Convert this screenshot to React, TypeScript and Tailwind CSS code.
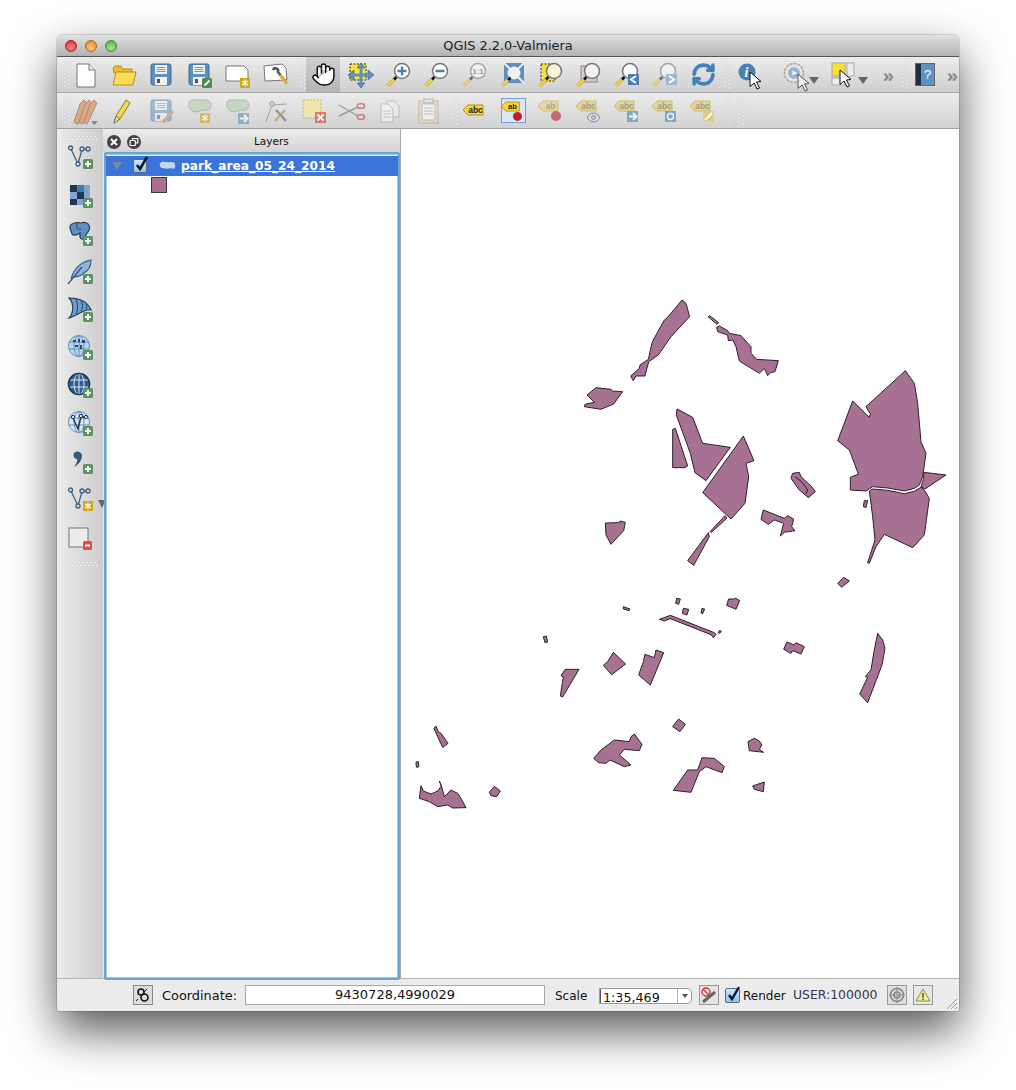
import React from "react";
import { Hand, RefreshCw, Eye } from "lucide-react";

const font = "font-['DejaVu_Sans',sans-serif]";

const Ico = ({ children, className = "" }: { children: React.ReactNode; className?: string }) => (
  <svg width="28" height="28" viewBox="0 0 28 28" className={`overflow-visible ${className}`}>
    {children}
  </svg>
);

const Grip = ({ className = "" }: { className?: string }) => (
  <svg width="8" height="28" viewBox="0 0 8 28" className={`shrink-0 ${className}`}>
    {[1, 5, 9, 13, 17, 21, 25].map((y) => (
      <g key={y}>
        <circle cx="2" cy={y} r="1.1" fill="#fafafa" stroke="#c4c4c4" strokeWidth=".4" />
        <circle cx="6" cy={y + 2} r="1.1" fill="#fafafa" stroke="#c4c4c4" strokeWidth=".4" />
      </g>
    ))}
  </svg>
);

const HGrip = ({ className = "" }: { className?: string }) => (
  <svg width="36" height="6" viewBox="0 0 36 6" className={className}>
    {[1, 5, 9, 13, 17, 21, 25, 29, 33].map((x) => (
      <g key={x}>
        <circle cx={x} cy="1.5" r="1.1" fill="#fafafa" stroke="#c4c4c4" strokeWidth=".4" />
        <circle cx={x + 2} cy="4.5" r="1.1" fill="#fafafa" stroke="#c4c4c4" strokeWidth=".4" />
      </g>
    ))}
  </svg>
);

const PlusBadge = ({ x = 17, y = 17 }: { x?: number; y?: number }) => (
  <g transform={`translate(${x} ${y})`}>
    <rect width="10" height="10" rx="1.5" fill="#5b9460" />
    <path d="M5 2v6M2 5h6" stroke="#fff" strokeWidth="2" />
  </g>
);

const StarBadge = ({ x = 17, y = 17, color = "#d0a818" }: { x?: number; y?: number; color?: string }) => (
  <g transform={`translate(${x} ${y})`}>
    <rect width="10" height="10" fill={color} />
    <path d="M5 1.5v7M2 3l6 4M8 3L2 7" stroke="#fff" strokeWidth="1.2" />
  </g>
);

const Cursor = ({ x = 14, y = 12 }: { x?: number; y?: number }) => (
  <path
    transform={`translate(${x} ${y})`}
    d="M0 0L11 9.5L6.5 10L9.5 16L7 17L4.2 11L0 14.5Z"
    fill="#fff"
    stroke="#111"
    strokeWidth="1"
  />
);

const Floppy = () => (
  <g>
    <rect x="3" y="3" width="20" height="21" rx="2" fill="#5f8fc1" stroke="#41688f" />
    <rect x="7" y="4" width="12" height="9" fill="#f4f4f4" />
    <path d="M8.5 6.5h9M8.5 8.5h9M8.5 10.5h9" stroke="#777" strokeWidth=".8" />
    <rect x="7" y="16" width="12" height="8" fill="#f0f0f0" />
    <rect x="9" y="18" width="3" height="4" fill="#555" />
  </g>
);

const Lens = ({ fill = "#fff", children, faded = false }: { fill?: string; children?: React.ReactNode; faded?: boolean }) => (
  <g opacity={faded ? 0.55 : 1}>
    <path d="M2.5 25L10 17.5" stroke="#d8b02c" strokeWidth="3.6" />
    <path d="M2.5 25L10 17.5" stroke="#f5dc62" strokeWidth="1.6" />
    <path d="M9 18.5L11.5 16" stroke="#111" strokeWidth="2.6" />
    <circle cx="17" cy="10" r="7.5" fill={fill} stroke="#777" strokeWidth="1.5" />
    {children}
  </g>
);

const Tag = ({ label = "abc", fill = "#e8d070", ink = "#7c7c70", stroke = "#c8a830" }: { label?: string; fill?: string; ink?: string; stroke?: string }) => (
  <g>
    <path d="M1 9L6 4H21V14H6Z" fill={fill} stroke={stroke} />
    <text x="13.5" y="12" textAnchor="middle" fontSize="8.5" fontWeight="700" fontFamily="Liberation Sans, sans-serif" fill={ink}>
      {label}
    </text>
  </g>
);

const Vertex = () => (
  <g fill="none" stroke="#3f5f80" strokeWidth="1.3">
    <path d="M4 5L11 20L15 5.5L21 5" />
    <circle cx="3.5" cy="4" r="2" fill="#cfe0ef" />
    <circle cx="11" cy="20" r="2" fill="#cfe0ef" />
    <circle cx="15" cy="5" r="2" fill="#cfe0ef" />
    <circle cx="21" cy="5" r="2" fill="#cfe0ef" />
  </g>
);

const Globe = ({ fill = "#bcd3ea", stroke = "#5f8fc1" }: { fill?: string; stroke?: string }) => (
  <g fill="none" stroke={stroke} strokeWidth="1">
    <circle cx="12" cy="12" r="10.5" fill={fill} />
    <ellipse cx="12" cy="12" rx="5" ry="10.5" />
    <path d="M2 8h20M2 15h20M12 1.5v21" />
  </g>
);

// map outlines below use the crop coordinates they were measured in (3x)
const upper = [
  "333,30 345,40 356,80 300,140 262,195 233,215 222,258 195,258 187,272 179,258 205,235 207,225 232,208 244,155 280,90 290,82",
  "411,80 416,77 443,98 438,103",
  "437,112 445,108 470,122 475,130 510,137 540,170 540,190 557,208 622,212 612,245 598,248 590,257 580,235 565,250 505,213 495,170 485,150 472,152 470,135 440,125",
  "75,293 120,298 125,303 155,305 128,342 90,358 40,350 42,343 70,337 48,315",
  "318,357 365,382 395,460 478,472 405,572 372,548 358,490 316,375",
  "305,418 313,415 350,528 342,533 305,533",
  "517,438 549,512 525,520 533,560 522,640 480,687 395,608",
  "103,699 145,698 147,693 163,697 158,722 120,763 105,735",
  "462,677 468,684 422,727 417,725",
  "412,728 415,740 368,826 350,812",
  "665,550 685,547 690,560 722,590 733,605 712,623 685,600 660,565",
  "577,660 640,685 650,677 668,687 662,710 672,722 640,727 628,738 638,700 610,690 592,703 570,688",
  "1003,242 1030,280 1040,340 1050,455 1065,490 1055,560 1045,585 1030,595 1000,603 950,594 905,590 885,603 838,600 838,562 862,552 835,480 800,452 845,333 895,382 898,372 885,350",
  "895,603 905,597 950,601 1000,611 1030,604 1050,592 1060,600 1075,625 1060,735 1025,773 940,733 915,770 895,820 890,818 912,750 905,680",
  "1058,547 1125,555 1062,597 1050,590 1058,565",
  "880,632 890,632 885,653 877,650",
  "818,862 835,873 812,892 800,880",
];

const lower = [
  "812,25 823,27 818,43 809,40",
  "832,55 848,58 843,75 829,70",
  "888,55 896,57 890,71 885,69",
  "652,50 672,57 669,62 652,57",
  "968,27 985,27 988,24 1001,32 990,58 962,46",
  "760,88 793,76 925,128 930,133 922,143 915,134 793,86 775,93",
  "936,128 941,121 946,124 941,130",
  "412,140 421,138 425,156 417,158",
  "1143,156 1165,165 1170,158 1195,170 1185,192 1160,182 1155,190 1133,178",
  "622,187 659,222 617,254 592,226 605,215",
  "717,193 745,203 750,180 773,188 765,208 733,285 698,255 712,215",
  "478,238 519,238 470,321 463,318 472,260 465,257",
  "1415,130 1430,150 1437,175 1428,225 1385,338 1361,312 1385,262 1378,260 1395,240 1403,190",
  "90,408 97,425 105,430 126,460 110,472 95,440 84,415",
  "625,450 670,455 675,440 685,432 708,463 700,482 655,478 640,495 675,525 655,530 612,510 600,520 578,518 563,505 585,480",
  "818,387 838,403 822,425 800,410",
  "1045,445 1060,453 1068,465 1060,478 1073,487 1030,482 1026,455",
  "888,503 925,505 955,530 948,548 900,530 880,545 855,607 802,601 845,540 875,540",
  "1075,576 1072,605 1045,598 1040,588",
  "30,516 37,515 39,530 31,532",
  "45,587 52,603 75,612 95,603 106,588 100,573 107,590 115,620 135,600 155,610 165,625 180,653 140,654 125,645 95,650 70,635 40,625",
  "265,589 283,603 272,620 255,617 250,607",
];

const Cell = ({ children, className = "" }: { children: React.ReactNode; className?: string }) => (
  <div className={`w-[38px] h-full flex items-center justify-center shrink-0 ${className}`}>{children}</div>
);

const ToolbarOne = () => (
  <div className="h-9 flex items-center pl-[6px] bg-gradient-to-b from-[#ececec] to-[#cfcfcf] border-b border-[#a8a8a8]">
    <Grip className="mr-[-4px]" />
    <Cell>
      <Ico><path d="M5 3H17L23 9V26H5Z" fill="#fff" stroke="#777" /><path d="M17 3V9H23" fill="#eee" stroke="#777" /></Ico>
    </Cell>
    <Cell>
      <Ico><path d="M3 7L5 5H11L13 8H22V12H4Z" fill="#e8bd30" stroke="#b59020" /><path d="M6 11H26L23 24H3Z" fill="#fbdb58" stroke="#b59020" /></Ico>
    </Cell>
    <Cell><Ico><Floppy /></Ico></Cell>
    <Cell>
      <Ico>
        <Floppy />
        <rect x="16" y="17" width="10" height="10" rx="1.5" fill="#4e8c52" />
        <path d="M18.5 24.5L23.5 19.5" stroke="#fff" strokeWidth="2" />
      </Ico>
    </Cell>
    <Cell>
      <Ico><path d="M2 5H20L24 9V20H2Z" fill="#fff" stroke="#777" /><StarBadge x={16} y={17} /></Ico>
    </Cell>
    <Cell>
      <Ico>
        <path d="M2 5L20 3L24 7L25 19L3 20Z" fill="#fff" stroke="#777" />
        <path d="M11 9C12 6 17 7 16 11L24 21" fill="none" stroke="#555" strokeWidth="2.6" />
        <path d="M18 14L25 23" stroke="#dcb232" strokeWidth="3" />
      </Ico>
    </Cell>
    <Grip className="mr-[-1px] ml-[4px]" />
    <div className="w-[34px] h-full flex items-center justify-center shrink-0 bg-gradient-to-b from-[#cfcfcf] to-[#b4b4b4]">
      <Hand size={25} fill="#fff" color="#111" strokeWidth={1.4} />
    </div>
    <Cell className="ml-[2px]">
      <Ico>
        <rect x="3" y="3" width="16" height="16" fill="#f6e23e" stroke="#222" strokeWidth="1" strokeDasharray="2 1.5" />
        <path d="M14 2L18 7H10ZM14 27L18 22H10ZM1 14L7 9V19ZM27 14L21 9V19Z" fill="#5f8fc1" stroke="#355f88" strokeWidth=".6" />
        <path d="M14 6V23M6 14H22" stroke="#5f8fc1" strokeWidth="3" />
      </Ico>
    </Cell>
    <Cell>
      <Ico><Lens><path d="M17 5.5V14.5M12.5 10H21.5" stroke="#4a80b8" strokeWidth="2.4" /></Lens></Ico>
    </Cell>
    <Cell>
      <Ico><Lens><path d="M12.5 10H21.5" stroke="#4a80b8" strokeWidth="2.4" /></Lens></Ico>
    </Cell>
    <Cell>
      <Ico>
        <Lens faded>
          <text x="17" y="13" textAnchor="middle" fontSize="8" fontWeight="700" fontFamily="Liberation Sans, sans-serif" fill="#666">1:1</text>
        </Lens>
      </Ico>
    </Cell>
    <Cell>
      <Ico>
        <rect x="5" y="2" width="20" height="20" fill="#5f8fc1" />
        <path d="M5 2L25 22M25 2L5 22" stroke="#e8eef4" strokeWidth="2" />
        <circle cx="15" cy="12" r="6.5" fill="#eef2f6" />
        <path d="M3 25L10 18" stroke="#d8b02c" strokeWidth="3.6" />
        <path d="M3 25L10 18" stroke="#f5dc62" strokeWidth="1.6" />
        <path d="M9 19L11.5 16.5" stroke="#111" strokeWidth="2.6" />
      </Ico>
    </Cell>
    <Cell>
      <Ico>
        <rect x="4" y="3" width="14" height="17" fill="#f6e23e" stroke="#222" strokeDasharray="2 1.5" />
        <Lens fill="#f6f3d8" />
      </Ico>
    </Cell>
    <Cell>
      <Ico>
        <rect x="6" y="5" width="16" height="16" fill="#d5ccd0" stroke="#8b8088" />
        <Lens fill="#f2f2f2" />
      </Ico>
    </Cell>
    <Cell>
      <Ico>
        <Lens />
        <rect x="15" y="13" width="11" height="11" fill="#4a80b8" />
        <path d="M23 15L18 18.5L23 22" fill="none" stroke="#fff" strokeWidth="2" />
      </Ico>
    </Cell>
    <Cell>
      <Ico>
        <Lens faded />
        <rect x="15" y="13" width="11" height="11" fill="#9cb9d6" />
        <path d="M18 15L23 18.5L18 22" fill="none" stroke="#fff" strokeWidth="2" />
      </Ico>
    </Cell>
    <Cell><RefreshCw size={25} color="#3f81bf" strokeWidth={3.4} /></Cell>
    <Grip className="ml-[1px]" />
    <div className="w-[37px] h-full flex items-center justify-center shrink-0">
      <Ico>
        <circle cx="11" cy="11" r="8.5" fill="#4a80b8" />
        <text x="10.5" y="16" textAnchor="middle" fontSize="14" fontWeight="700" fontStyle="italic" fontFamily="Liberation Serif, serif" fill="#fff">i</text>
        <Cursor x={14} y={11} />
      </Ico>
    </div>
    <div className="w-[60px] h-full flex items-center justify-center shrink-0 pl-1">
      <Ico>
        <circle cx="13" cy="12" r="9.5" fill="#e4e4e4" stroke="#a8a8a8" strokeWidth="1.6" strokeDasharray="3 1" />
        <circle cx="13" cy="12" r="5.5" fill="#8fb4d8" stroke="#b8b8b8" />
        <path d="M11.5 9.5L16 12L11.5 14.5Z" fill="#fff" />
        <g opacity=".65"><Cursor x={17} y={13} /></g>
      </Ico>
      <span className="w-0 h-0 border-x-[5px] border-x-transparent border-t-[7px] border-t-[#666] mt-3" />
    </div>
    <div className="w-[42px] h-full flex items-center justify-center shrink-0">
      <Ico>
        <rect x="2" y="2" width="13" height="13" fill="#fbe032" stroke="#a8a8a8" />
        <rect x="17" y="2" width="7" height="13" fill="#ededed" stroke="#a8a8a8" />
        <rect x="2" y="17" width="13" height="7" fill="#ededed" stroke="#a8a8a8" />
        <Cursor x={10} y={9} />
      </Ico>
      <span className="w-0 h-0 border-x-[5px] border-x-transparent border-t-[7px] border-t-[#666] mt-3" />
    </div>
    <span className="text-[18px] font-bold text-[#8a8a8a] ml-[13px] leading-none">»</span>
    <Grip className="ml-[7px]" />
    <div className="ml-[6px] w-5 h-[23px] flex shrink-0 border border-[#666]">
      <div className="w-[5px] bg-[#1f2d3d]" />
      <div className="flex-1 bg-[#6192c4] text-white text-[13px] leading-[21px] text-center font-['Liberation_Sans',sans-serif]">?</div>
    </div>
    <span className="text-[18px] font-bold text-[#8a8a8a] ml-[12px] leading-none">»</span>
  </div>
);

const ToolbarTwo = () => (
  <div className="h-9 flex items-center pl-[6px] bg-gradient-to-b from-[#ececec] to-[#d2d2d2] border-b border-[#a0a0a0]">
    <Grip className="mr-[-4px]" />
    <Cell className="opacity-70">
      <Ico>
        <path d="M2 25L8 7L12 3L15 6L9 25L5 27Z" fill="#d99060" stroke="#9a6a48" />
        <path d="M7 25L13 7L17 3L20 6L14 25L10 27Z" fill="#d99060" stroke="#9a6a48" />
        <path d="M12 25L18 7L22 3L25 6L17 23L15 27Z" fill="#d99060" stroke="#9a6a48" />
        <path d="M19 24h7l-3.5 4z" fill="#666" />
      </Ico>
    </Cell>
    <Cell className="ml-[-3px]">
      <Ico>
        <path d="M7 26L9 19L19 3L23 6L13 22Z" fill="#f3d84c" stroke="#8a7a30" />
        <path d="M7 26L9 19L13 22Z" fill="#efe5c4" stroke="#8a7a30" />
      </Ico>
    </Cell>
    <Cell className="ml-[3px] opacity-50">
      <Ico>
        <Floppy />
        <path d="M15 25L25 14" stroke="#cc7a3c" strokeWidth="3" />
      </Ico>
    </Cell>
    <Cell className="opacity-60">
      <Ico>
        <path d="M3 5C6 1 13 4 18 3C25 2 26 8 24 11C22 15 19 12 14 14C8 17 1 12 3 5Z" fill="#b5d0b0" stroke="#8aa088" />
        <StarBadge x={14} y={16} />
      </Ico>
    </Cell>
    <Cell className="opacity-60">
      <Ico>
        <path d="M3 5C6 1 13 4 18 3C25 2 26 8 24 11C22 15 19 12 14 14C8 17 1 12 3 5Z" fill="#b5d0b0" stroke="#8aa088" />
        <rect x="14" y="16" width="11" height="11" fill="#5f8fc1" />
        <path d="M16 21.5H23M20 18L23.5 21.5L20 25" fill="none" stroke="#fff" strokeWidth="2" />
      </Ico>
    </Cell>
    <Cell className="opacity-60">
      <Ico>
        <path d="M4 25L10 8L25 7" fill="none" stroke="#777" />
        <circle cx="10" cy="7" r="2.4" fill="#b5d0b0" stroke="#777" />
        <path d="M13 24L23 13" stroke="#b88f3c" strokeWidth="2.4" />
        <path d="M14 13L24 24" stroke="#666" strokeWidth="2.4" />
      </Ico>
    </Cell>
    <Cell className="opacity-70">
      <Ico>
        <rect x="3" y="3" width="18" height="18" fill="#f4e79a" stroke="#b5a040" strokeDasharray="2 1.5" />
        <rect x="15" y="15" width="11" height="11" fill="#d6524a" />
        <path d="M17.5 17.5L23.5 23.5M23.5 17.5L17.5 23.5" stroke="#fff" strokeWidth="2" />
      </Ico>
    </Cell>
    <Cell className="opacity-80">
      <Ico>
        <path d="M1 8L20 19M1 19L20 10" stroke="#8c8c8c" strokeWidth="1.4" />
        <ellipse cx="23" cy="9" rx="3.6" ry="2.4" fill="none" stroke="#c25a5a" strokeWidth="1.4" />
        <ellipse cx="23" cy="20" rx="3.6" ry="2.4" fill="none" stroke="#c25a5a" strokeWidth="1.4" />
      </Ico>
    </Cell>
    <Cell className="opacity-50">
      <Ico>
        <path d="M11 4H18L23 9V20H11Z" fill="#f3f3f3" stroke="#999" />
        <path d="M5 7H12L17 12V25H5Z" fill="#fff" stroke="#999" />
        <path d="M7 14H15M7 17H15M7 20H15" stroke="#aaa" />
      </Ico>
    </Cell>
    <Cell className="opacity-50">
      <Ico>
        <rect x="5" y="4" width="19" height="22" fill="#f2d9b8" stroke="#b8884c" />
        <rect x="8" y="7" width="13" height="16" fill="#fff" stroke="#999" />
        <rect x="10" y="2" width="9" height="4" fill="#ddd" stroke="#888" />
        <path d="M10 11H19M10 14H19M10 17H19" stroke="#999" />
      </Ico>
    </Cell>
    <Grip className="mr-[-3px] ml-[4px]" />
    <Cell>
      <Ico>
        <g transform="translate(1 4)">
          <Tag fill="#f5d53a" ink="#222" stroke="#b59020" />
        </g>
      </Ico>
    </Cell>
    <Cell>
      <div className="w-[25px] h-[25px] border border-[#6f9ee0] bg-[#dbe6f2] flex items-center justify-center">
        <Ico className="scale-90">
          <Tag label="ab" fill="#f5d53a" ink="#222" stroke="#b59020" />
          <circle cx="19" cy="20" r="5" fill="#b8232a" />
        </Ico>
      </div>
    </Cell>
    <Cell className="opacity-60">
      <Ico>
        <Tag label="ab" />
        <circle cx="19" cy="19" r="5" fill="#b8232a" />
      </Ico>
    </Cell>
    <Cell className="opacity-70">
      <Ico>
        <Tag />
        <g transform="translate(11 13)"><Eye size={15} color="#4a6c90" strokeWidth={1.6} /></g>
      </Ico>
    </Cell>
    <Cell className="opacity-70">
      <Ico>
        <Tag />
        <rect x="14" y="14" width="11" height="11" fill="#5f8fc1" />
        <path d="M16 19.5H23M20 16L23.5 19.5L20 23" fill="none" stroke="#fff" strokeWidth="2" />
      </Ico>
    </Cell>
    <Cell className="opacity-70">
      <Ico>
        <Tag />
        <rect x="14" y="14" width="11" height="11" fill="#5f8fc1" />
        <circle cx="19.5" cy="19.5" r="3" fill="none" stroke="#fff" strokeWidth="1.4" />
      </Ico>
    </Cell>
    <Cell className="opacity-70">
      <Ico>
        <Tag />
        <rect x="14" y="14" width="11" height="11" fill="#e0c860" />
        <path d="M16 23L23 16" stroke="#fff" strokeWidth="2.4" />
      </Ico>
    </Cell>
    <Grip className="ml-[2px]" />
    <Grip className="ml-[5px]" />
  </div>
);

const SideBar = () => (
  <div className="w-[46px] shrink-0 flex flex-col items-center bg-gradient-to-r from-[#ececec] to-[#cdcdcd] pt-[6px] pl-[2px]">
    <HGrip className="mr-[2px]" />
    <div className="h-[38px] mt-[-2px] flex items-center justify-center shrink-0">
      <Ico><Vertex /><PlusBadge x={16} y={15} /></Ico>
    </div>
    <div className="h-[38px] flex items-center justify-center shrink-0">
      <Ico>
        <rect x="3" y="3" width="20" height="20" fill="#7fa6d2" />
        <path d="M3 3h7v7H3zM10 10h7v7h-7zM3 17h7v6H3z" fill="#1f3550" />
        <path d="M10 3h7v7h-7z" fill="#4a78a8" />
        <PlusBadge x={16} y={16} />
      </Ico>
    </div>
    <div className="h-[38px] flex items-center justify-center shrink-0">
      <Ico>
        <path d="M3 8C2 3 10 2 14 3C20 1 24 5 22 10C21 13 19 13 18 17C17 20 14 20 13 17V13C10 15 7 16 5 14Z" fill="#5f8fc1" stroke="#243f5c" strokeWidth="1.2" />
        <path d="M10 4C9 8 11 10 14 9" fill="none" stroke="#243f5c" />
        <PlusBadge x={16} y={16} />
      </Ico>
    </div>
    <div className="h-[38px] flex items-center justify-center shrink-0">
      <Ico>
        <path d="M4 21C6 12 13 4 24 2C24 9 21 13 17 15C13 19 9 19 5 19Z" fill="#8fb4d8" stroke="#34587c" strokeWidth="1.1" />
        <path d="M1 26L15 9" stroke="#34587c" strokeWidth="1.2" />
        <PlusBadge x={16} y={16} />
      </Ico>
    </div>
    <div className="h-[38px] flex items-center justify-center shrink-0">
      <Ico>
        <path d="M2 2C10 2 20 4 24 14C18 12 10 20 2 22C6 18 8 8 2 2Z" fill="#6f9ccb" stroke="#1f3f60" strokeWidth="1.2" />
        <path d="M9 3C11 8 11 13 9 18M14 5C16 9 16 12 14 15M19 8C20 10 20 11 19 13" stroke="#1f3f60" fill="none" />
        <PlusBadge x={16} y={16} />
      </Ico>
    </div>
    <div className="h-[38px] flex items-center justify-center shrink-0">
      <Ico>
        <Globe />
        <path d="M6 6h3v2H6zM11 5h2v3h-2zM15 6h3v3h-3zM8 11h3v2H8zM13 11h2v4h-2z" fill="#244a70" />
        <PlusBadge x={16} y={16} />
      </Ico>
    </div>
    <div className="h-[38px] flex items-center justify-center shrink-0">
      <Ico>
        <Globe fill="#2f5f92" stroke="#dfe9f3" />
        <circle cx="12" cy="12" r="10.5" fill="none" stroke="#1f3550" strokeWidth="1.6" />
        <PlusBadge x={16} y={16} />
      </Ico>
    </div>
    <div className="h-[38px] flex items-center justify-center shrink-0">
      <Ico>
        <Globe fill="#dce8f4" />
        <path d="M6 8L11 19L14 7L19 7" fill="none" stroke="#1f3550" strokeWidth="1.4" />
        <circle cx="6" cy="7" r="1.6" fill="#fff" stroke="#1f3550" />
        <circle cx="14" cy="6" r="1.6" fill="#fff" stroke="#1f3550" />
        <circle cx="19" cy="7" r="1.6" fill="#fff" stroke="#1f3550" />
        <PlusBadge x={16} y={16} />
      </Ico>
    </div>
    <div className="h-[38px] flex items-center justify-center shrink-0">
      <Ico>
        <path d="M8 4C13 2 17 6 14 12C13 15 9 18 7 19C9 16 11 13 10 11C7 11 5 6 8 4Z" fill="#36587c" />
        <PlusBadge x={16} y={16} />
      </Ico>
    </div>
    <div className="h-[38px] flex items-center justify-center shrink-0 relative">
      <Ico><Vertex /><StarBadge x={16} y={15} /></Ico>
      <span className="absolute left-[31px] top-[19px] w-0 h-0 border-x-[4px] border-x-transparent border-t-[8px] border-t-[#666]" />
    </div>
    <div className="h-[40px] flex items-center justify-center shrink-0">
      <Ico>
        <rect x="2" y="3" width="19" height="19" fill="#ececec" stroke="#777" />
        <rect x="16" y="16" width="9" height="9" rx="1.5" fill="#e44a50" />
        <path d="M18 20.5H23" stroke="#fff" strokeWidth="2" />
      </Ico>
    </div>
    <HGrip className="mr-[2px] mt-[2px]" />
  </div>
);

const LayersDock = () => (
  <div className="w-[297px] shrink-0 flex flex-col bg-[#e6e6e6]">
    <div className="h-[23px] flex items-center relative pt-[2px] bg-gradient-to-b from-[#ececec] to-[#d4d4d4]">
      <span className="ml-[4px] w-[14px] h-[14px] rounded-full bg-[#444] flex items-center justify-center">
        <svg width="8" height="8" viewBox="0 0 8 8"><path d="M1 1L7 7M7 1L1 7" stroke="#fff" strokeWidth="2" /></svg>
      </span>
      <span className="ml-[6px] w-[14px] h-[14px] rounded-full bg-[#444] flex items-center justify-center">
        <svg width="10" height="10" viewBox="0 0 10 10" fill="none" stroke="#fff" strokeWidth="1.2"><rect x="1" y="3.5" width="5.5" height="5" rx="1" /><path d="M3.5 3V1.5H8.8V6H7" /></svg>
      </span>
      <span className={`absolute left-[151px] text-[10.5px] text-[#111] ${font}`}>Layers</span>
    </div>
    <div className="flex-1 bg-white border-[2px] border-[#68a7d2] rounded-[2px] ml-[1px] mb-[-2px] shadow-[inset_0_0_0_1px_#9cc8e4] relative z-10 pt-[2px]">
      <div className="h-[20px] bg-[#3a74d8] flex items-center relative">
        <span className="ml-[6px] w-0 h-0 border-x-[5px] border-x-transparent border-t-[8px] border-t-[#7c8aa4]" />
        <span className="ml-[11px] w-[14px] h-[14px] bg-gradient-to-b from-[#cfe6f8] to-[#8fc0e8] border border-[#5a6a7a] rounded-[2px] relative">
          <svg width="16" height="17" viewBox="0 0 16 17" className="absolute left-0 top-[-5px]"><path d="M3 10L6 14L13 2" fill="none" stroke="#0b1a33" strokeWidth="2.6" /></svg>
        </span>
        <svg width="18" height="12" viewBox="0 0 18 12" className="ml-[12px]"><path d="M1 3C4 0 8 3 12 2C17 1 17 7 15 9C12 7 8 10 5 8C2 9 0 6 1 3Z" fill="#c4d4ea" /></svg>
        <span className={`ml-[4px] text-[12.2px] font-bold text-white underline ${font}`}>park_area_05_24_2014</span>
      </div>
      <div className="ml-[45px] mt-[1px] w-4 h-4 bg-[#a77194] border border-[#4a3040]" />
    </div>
  </div>
);

const MapCanvas = () => (
  <div className="flex-1 bg-white border-l border-[#a8a8a8] min-w-0">
    <svg viewBox="400 129 558 849" className="w-full h-full block">
      <g transform="translate(570 290) scale(.33333)" fill="#a77194" stroke="#2e2028">
        {upper.map((p) => (
          <polygon key={p} points={p} vectorEffect="non-scaling-stroke" strokeWidth="1" />
        ))}
        <path d="M672,560 L695,578 L710,600 L705,612" fill="none" vectorEffect="non-scaling-stroke" strokeWidth="1" />
      </g>
      <g transform="translate(405 590) scale(.33333)" fill="#a77194" stroke="#2e2028">
        {lower.map((p) => (
          <polygon key={p} points={p} vectorEffect="non-scaling-stroke" strokeWidth="1" />
        ))}
      </g>
    </svg>
  </div>
);

const StatusBar = () => (
  <div className={`h-[33px] shrink-0 flex items-center relative bg-[#ececec] border-t border-[#b4b4b4] text-[12px] text-[#111] ${font}`}>
    <div className="ml-[76px] w-5 h-5 border border-[#888] bg-[#dcdcdc] flex items-center justify-center shrink-0">
      <svg width="16" height="16" viewBox="0 0 16 16" fill="none" stroke="#111" strokeWidth="1.6">
        <circle cx="6" cy="5" r="3" />
        <circle cx="9.5" cy="10.5" r="3.5" />
        <path d="M12 2L9 5M3 12L1 14" strokeWidth="1" />
      </svg>
    </div>
    <span className="ml-[9px] w-[83px] shrink-0 text-[12.9px] pt-[1px]">Coordinate:</span>
    <div className="w-[300px] h-5 shrink-0 border border-[#a8a8a8] bg-white text-center text-[13px] leading-[18px]">9430728,4990029</div>
    <span className="ml-[10px] w-[44px] shrink-0 pt-[1px]">Scale</span>
    <div className="w-[93px] h-4 mt-[2px] shrink-0 flex border border-[#9a9a9a] rounded-r-[5px] bg-white">
      <span className="flex-1 leading-[17px] pl-[2px] text-[12.7px] border-l border-[#555]">1:35,469</span>
      <span className="w-[14px] border-l border-[#bbb] flex items-center justify-center">
        <span className="w-0 h-0 border-x-[3px] border-x-transparent border-t-[4px] border-t-[#555]" />
      </span>
    </div>
    <div className="ml-[7px] w-5 h-5 shrink-0 border border-[#999] bg-[#e4e4e4] flex items-center justify-center">
      <svg width="18" height="18" viewBox="0 0 18 18" fill="none">
        <path d="M3 16L15 6" stroke="#666" strokeWidth="3" />
        <circle cx="6" cy="6" r="4" stroke="#d23a3a" strokeWidth="1.4" />
        <path d="M3.2 3.2L8.8 8.8" stroke="#d23a3a" strokeWidth="1.4" />
      </svg>
    </div>
    <span className="ml-[6px] w-[15px] h-[15px] shrink-0 bg-gradient-to-b from-[#cfe6f8] to-[#8fc0e8] border border-[#5a6a7a] rounded-[2px] relative">
      <svg width="16" height="17" viewBox="0 0 16 17" className="absolute left-0 top-[-4px]"><path d="M3 10L6 14L13 2" fill="none" stroke="#0b1a33" strokeWidth="2.4" /></svg>
    </span>
    <span className="ml-[3px] w-[50px] shrink-0 pt-[1px]">Render</span>
    <span className="text-[#333355] w-[94px] shrink-0 text-[12.4px] pt-[1px]">USER:100000</span>
    <div className="w-5 h-5 shrink-0 border border-[#999] bg-[#dedede] flex items-center justify-center">
      <svg width="16" height="16" viewBox="0 0 16 16" fill="none" stroke="#888" strokeWidth="1.6">
        <circle cx="8" cy="8" r="6.5" />
        <circle cx="8" cy="8" r="3" />
        <path d="M8 0V16M0 8H16" strokeWidth="1" />
      </svg>
    </div>
    <div className="ml-[6px] w-5 h-5 shrink-0 border border-[#999] bg-[#e8e8e8] flex items-center justify-center">
      <svg width="16" height="16" viewBox="0 0 16 16">
        <path d="M8 2L15 14H1Z" fill="#f3ed9a" stroke="#8a8a50" />
        <path d="M8 6V10.5M8 11.5V13" stroke="#333" strokeWidth="1.3" />
      </svg>
    </div>
    <svg width="12" height="12" viewBox="0 0 12 12" className="absolute right-[1px] bottom-[1px]" stroke="#999">
      <path d="M1 11L11 1M5 11L11 5M9 11L11 9" />
    </svg>
  </div>
);

const App = () => (
  <div className="w-[1016px] h-[1090px] overflow-hidden bg-white pt-[35px] pl-[57px]">
    <div className="w-[902px] h-[976px] flex flex-col rounded-t-[5px] rounded-b-[3px] overflow-hidden shadow-[0_20px_46px_rgba(0,0,0,0.66),0_0_0_1px_rgba(0,0,0,0.12)] bg-[#ececec]">
      <div className={`h-[22px] shrink-0 flex items-center relative bg-gradient-to-b from-[#e2e2e2] to-[#b2b2b2] border-b border-[#555] ${font}`}>
        <span className="ml-[8px] w-3 h-3 rounded-full bg-[radial-gradient(circle_at_50%_70%,#ff8a80,#d0202a)] border border-[#9a2a2a]" />
        <span className="ml-[8px] w-3 h-3 rounded-full bg-[radial-gradient(circle_at_50%_70%,#ffc880,#e08020)] border border-[#a86a20]" />
        <span className="ml-[8px] w-3 h-3 rounded-full bg-[radial-gradient(circle_at_50%_70%,#a8e890,#48a040)] border border-[#4a8a3a]" />
        <span className="absolute inset-x-0 text-center text-[12.9px] text-[#222]">QGIS 2.2.0-Valmiera</span>
      </div>
      <ToolbarOne />
      <ToolbarTwo />
      <div className="flex-1 flex min-h-0">
        <SideBar />
        <LayersDock />
        <MapCanvas />
      </div>
      <StatusBar />
    </div>
  </div>
);

export default App;
